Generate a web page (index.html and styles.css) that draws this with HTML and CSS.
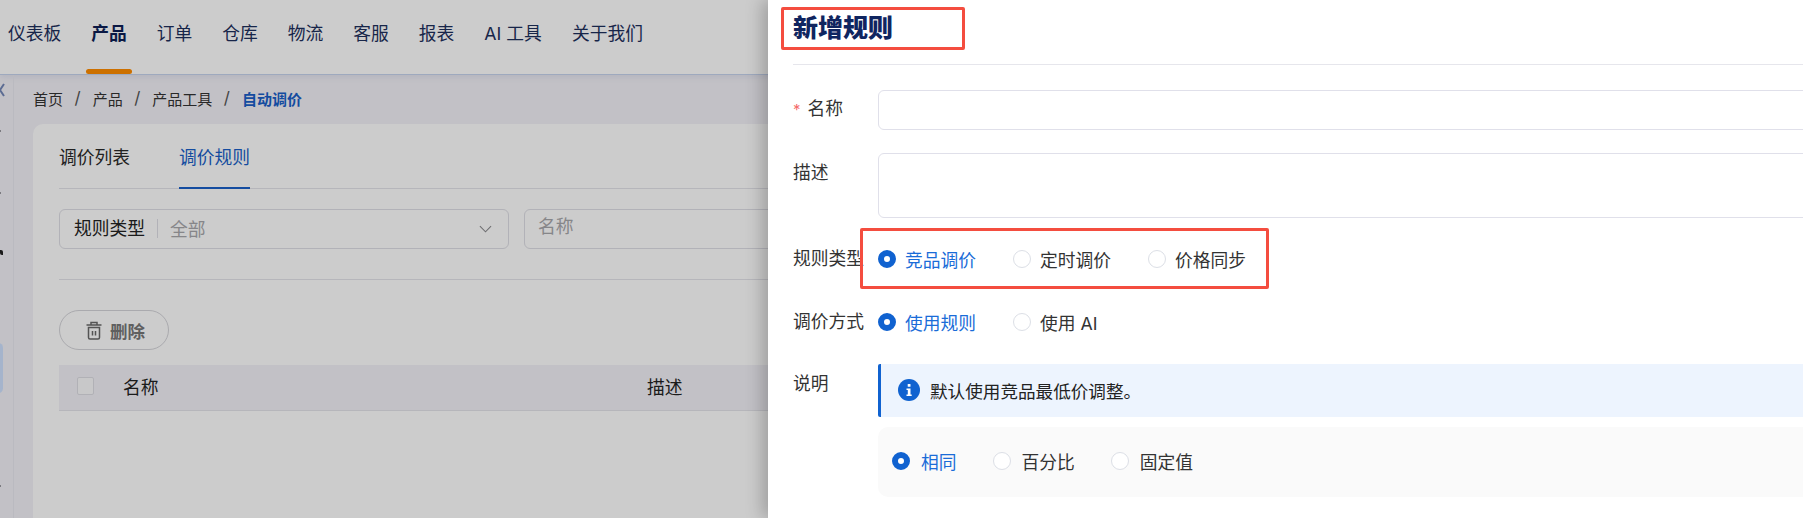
FILE: index.html
```html
<!DOCTYPE html>
<html lang="zh-CN">
<head>
<meta charset="utf-8">
<title>新增规则</title>
<link rel="stylesheet" href="styles.css">
</head>
<body>
<div class="page">
  <header class="topnav">
    <a class="nav-item">仪表板</a>
    <a class="nav-item active">产品</a>
    <a class="nav-item">订单</a>
    <a class="nav-item">仓库</a>
    <a class="nav-item">物流</a>
    <a class="nav-item">客服</a>
    <a class="nav-item">报表</a>
    <a class="nav-item">AI 工具</a>
    <a class="nav-item">关于我们</a>
  </header>
  <div class="main">
    <aside class="sidebar">
      <svg class="collapse" viewBox="0 0 6 14" width="6" height="14"><path d="M4 1 0 7l4 6" fill="none" stroke="#7488b8" stroke-width="2"/></svg>
      <span class="side-dot dot-a"></span>
      <span class="side-dot dot-b"></span>
      <span class="side-mark"></span>
      <span class="side-active"></span>
      <span class="side-dot dot-c"></span>
    </aside>
    <div class="content">
      <nav class="crumbs">
        <span>首页</span><i>/</i><span>产品</span><i>/</i><span>产品工具</span><i>/</i><b>自动调价</b>
      </nav>
      <section class="card">
        <div class="tabs">
          <span class="tab">调价列表</span>
          <span class="tab current">调价规则</span>
        </div>
        <div class="filters">
          <div class="select">
            <span class="sel-label">规则类型</span>
            <span class="sel-value">全部</span>
            <svg class="chev" viewBox="0 0 14 8" width="13" height="8"><path d="M1 1l6 6 6-6" fill="none" stroke="#8b8b8f" stroke-width="1.2"/></svg>
          </div>
          <div class="filter-input">名称</div>
        </div>
        <div class="filter-line"></div>
        <button class="del-btn">
          <svg viewBox="0 0 16 19" width="16" height="19"><path d="M.5 4h15M5 4V1.500h6V4M2.500 6.500V16.500a1.500 1.500 0 0 0 1.500 1.500h8a1.500 1.500 0 0 0 1.500-1.500V6.500zM6.500 10v4.500M9.500 10v4.500" fill="none" stroke="#6a6a6a" stroke-width="1.500"/></svg>
          <span>删除</span>
        </button>
        <div class="thead">
          <span class="check"></span>
          <span class="th-name">名称</span>
          <span class="th-desc">描述</span>
        </div>
      </section>
    </div>
  </div>
</div>
<div class="mask"></div>
<aside class="drawer">
  <h1 class="drawer-title">新增规则</h1>
  <div class="form">
    <div class="row row-name">
      <label class="label"><em>*</em>名称</label>
      <div class="input"></div>
    </div>
    <div class="row row-desc">
      <label class="label label-top">描述</label>
      <div class="textarea"></div>
    </div>
    <div class="row row-radio row-type">
      <label class="label">规则类型</label>
      <div class="radios">
        <span class="radio on"><s></s>竞品调价</span>
        <span class="radio"><s></s>定时调价</span>
        <span class="radio"><s></s>价格同步</span>
      </div>
    </div>
    <div class="row row-radio row-mode">
      <label class="label">调价方式</label>
      <div class="radios">
        <span class="radio on"><s></s>使用规则</span>
        <span class="radio"><s></s>使用 AI</span>
      </div>
    </div>
    <div class="row row-info">
      <label class="label label-note">说明</label>
      <div class="note-col">
        <div class="info">
          <svg viewBox="0 0 22 22" width="22" height="22"><circle cx="11" cy="11" r="11" fill="#1062d0"/><rect x="9.700" y="5" width="2.800" height="2.800" rx=".6" fill="#fff"/><path d="M8.500 9.500h4v6h1.200v1.500H8.500v-1.500h1.300v-4.500H8.500z" fill="#fff"/></svg>
          <span>默认使用竞品最低价调整。</span>
        </div>
        <div class="panel">
          <div class="radios">
            <span class="radio on"><s></s>相同</span>
            <span class="radio"><s></s>百分比</span>
            <span class="radio"><s></s>固定值</span>
          </div>
        </div>
      </div>
    </div>
  </div>
</aside>
<div class="mark mark-title"></div>
<div class="mark mark-type"></div>
</body>
</html>
```
FILE: styles.css
```css
* { box-sizing: border-box; }
html, body { margin: 0; height: 518px; overflow: hidden; }
body {
  position: relative;
  background: #f3f2f8;
  color: #222;
  font-family: "Inter", "Noto Sans CJK SC", sans-serif;
  font-size: 17.750px;
}
.page { height: 518px; display: flex; flex-direction: column; }

.topnav {
  height: 75px;
  flex: none;
  display: flex;
  padding-left: 3px;
  gap: 20px;
  background: #fff;
  border-bottom: 1px solid #c6d4ee;
  box-shadow: 0 2px 6px rgba(90, 110, 170, .12);
  position: relative;
}
.nav-item {
  position: relative;
  padding: 0 5px;
  height: 68px;
  line-height: 67px;
  color: #1d2f5c;
}
.nav-item.active { font-weight: 700; color: #0d1f55; }
.nav-item.active::after {
  content: "";
  position: absolute;
  left: 0;
  right: 0;
  top: 69px;
  height: 5px;
  border-radius: 3px;
  background: #ff8c00;
}

.main { flex: 1; display: flex; min-height: 0; }
.sidebar {
  width: 14px;
  flex: none;
  position: relative;
  border-right: 1px solid #e9e9f0;
}
.collapse { position: absolute; left: 0; top: 8px; }
.side-dot { position: absolute; left: 0; width: 1px; height: 2px; background: #9a9aa0; }
.dot-a { top: 55px; }
.dot-b { top: 117px; }
.dot-c { top: 410px; }
.side-mark {
  position: absolute; left: 0; top: 175px; width: 3px; height: 5px;
  border-radius: 0 2px 0 2px;
  background: #222;
}
.side-active {
  position: absolute; left: -6px; top: 268px; width: 9px; height: 50px;
  border-radius: 5px; background: #cfe2ff;
}
.content { flex: 1; padding-left: 19px; min-width: 0; }

.crumbs {
  height: 49px;
  display: flex;
  align-items: center;
  font-size: 15px;
  color: #333;
  padding-bottom: 3px;
}
.crumbs i { font-style: normal; margin: 0 12px 0 11.500px; color: #555; font-size: 17px; }
.crumbs b { color: #1a5fc8; font-weight: 700; }

.card {
  background: #fff;
  border-radius: 10px 0 0 0;
  padding-left: 26px;
  height: 394px;
}
.tabs {
  height: 65px;
  display: flex;
  gap: 49px;
  border-bottom: 1px solid #e4e4ea;
}
.tab {
  height: 65px;
  line-height: 68px;
  color: #2a2a2a;
}
.tab.current { color: #1a5fc8; border-bottom: 2px solid #1a5fc8; }

.filters { display: flex; gap: 15px; margin-top: 20px; height: 40px; }
.select {
  width: 450px;
  display: flex;
  align-items: center;
  border: 1px solid #dfdfe6;
  border-radius: 6px;
  padding: 0 15px 2px 14px;
}
.sel-label { padding-right: 12px; border-right: 1px solid #dfdfe6; line-height: 19px; height: 19px; white-space: nowrap; }
.sel-value { flex: 1; padding-left: 12px; color: #a8a8ac; }
.chev { margin: 2px 1px 0 0; }
.filter-input {
  flex: 1;
  border: 1px solid #dfdfe6;
  border-radius: 6px;
  padding-left: 13px;
  line-height: 33px;
  color: #a8a8ac;
}
.filter-line { height: 1px; margin-top: 30px; background: #e4e4ea; }

.del-btn {
  display: flex;
  align-items: center;
  gap: 8px;
  width: 110px;
  height: 40px;
  margin-top: 30px;
  padding: 0 0 0 26px;
  background: #fff;
  border: 1px solid #d5d5da;
  border-radius: 20px;
  color: #777;
  font: 700 17.500px "Inter", "Noto Sans CJK SC", sans-serif;
}
.thead {
  height: 46px;
  margin-top: 15px;
  display: flex;
  align-items: center;
  padding: 0 0 3px 18px;
  background: #f3f2f8;
  border-bottom: 1px solid #e4e4ea;
}
.check { width: 17px; height: 18px; border: 1px solid #dedee4; border-radius: 2px; background: #fafafc; }
.th-name { margin-left: 29px; width: 524px; }

.mask { position: absolute; inset: 0; background: rgba(0, 0, 0, .2); }

.drawer {
  position: absolute;
  left: 768px;
  top: 0;
  right: -40px;
  bottom: 0;
  background: #fff;
  box-shadow: -6px 0 16px rgba(0, 0, 0, .22);
  padding-left: 25px;
}
.drawer-title {
  margin: 0;
  height: 65px;
  line-height: 56px;
  font-size: 25px;
  font-weight: 900;
  color: #0f2560;
  border-bottom: 1px solid #e6e6ec;
}
.form { padding-top: 25px; }
.row { display: flex; }
.label { width: 85px; flex: none; color: #333; line-height: 38px; white-space: nowrap; }
.label em { font-style: normal; color: #f56c6c; margin-right: 7px; font-size: 15px; }
.label-top, .label-note { line-height: 40px; }
.input, .textarea { flex: 1; border: 1px solid #e0e0ea; border-radius: 6px; }
.row-name { height: 40px; }
.row-desc { margin-top: 23px; height: 65px; }
.textarea { height: 65px; }

.row-radio { height: 38px; align-items: center; }
.row-type { margin-top: 22px; }
.row-mode { margin-top: 25px; }
.radios { display: flex; gap: 37px; align-items: center; }
.radio { display: flex; align-items: center; gap: 9px; color: #333; white-space: nowrap; }
.radio s {
  width: 18px;
  height: 18px;
  flex: none;
  border-radius: 50%;
  border: 1px solid #dcdfe6;
  background: #fff;
}
.radio.on { color: #1a6cd8; }
.radio.on s { border: 6px solid #1062d0; }

.row-info { margin-top: 23px; }
.note-col { flex: 1; min-width: 0; }
.info {
  height: 53px;
  display: flex;
  align-items: center;
  gap: 10px;
  padding: 0 0 1px 17px;
  background: #edf4fe;
  border-left: 3px solid #1062d0;
  border-radius: 2px 0 0 2px;
  color: #222;
  font-size: 17.600px;
}
.panel {
  height: 70px;
  margin-top: 10px;
  background: #fafafa;
  border-radius: 10px;
  padding: 0 0 2px 14px;
  display: flex;
  align-items: center;
}
.panel .radios { gap: 36px; }
.panel .radio { gap: 11px; }

.mark { position: absolute; border: 3px solid #f44d3f; border-radius: 2px; }
.mark-title { left: 781px; top: 7px; width: 184px; height: 43px; }
.mark-type { left: 860px; top: 228px; width: 409px; height: 61px; }
```
